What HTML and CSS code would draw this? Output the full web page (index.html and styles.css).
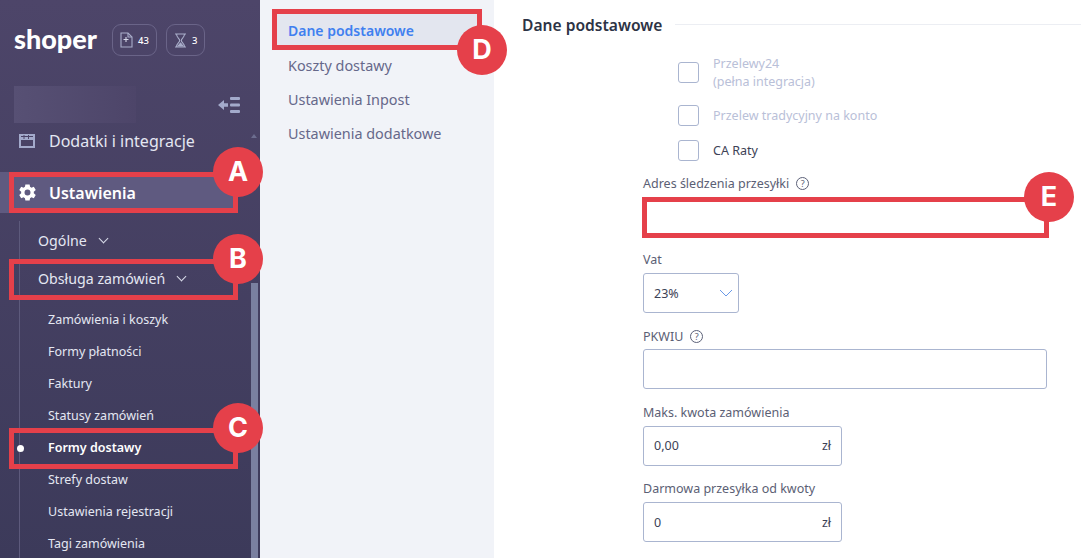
FILE: index.html
```html
<!DOCTYPE html>
<html lang="pl">
<head>
    <meta charset="UTF-8">
    <title>Formy dostawy</title>
    <link rel="stylesheet" href="styles.css">
</head>
<body>
    <div class="page">
        <aside class="sidebar">
            <div class="head">
                <span class="logo">shoper</span>
                <span class="pill">
                    <svg width="13" height="16" viewBox="0 0 13 16" fill="none" stroke="#a9aeca" stroke-width="1.1"><path d="M1 1h7l4 4v10H1z"/><path d="M8 1v4h4"/><path d="M6 5v5M3.500 7.500h5" stroke="#d5d8e8"/></svg>
                    43
                </span>
                <span class="pill">
                    <svg width="13" height="15" viewBox="0 0 13 15" fill="none" stroke="#a9aeca" stroke-width="1.1"><path d="M1 1h11M1 14h11M2.500 1c0 4 3.200 4.500 3.200 6.500S2.500 10 2.500 14M10.500 1c0 4-3.200 4.500-3.200 6.500s3.200 2.500 3.200 6.500"/><path d="M4 13l2.500-3L9 13z" fill="#a9aeca"/></svg>
                    3
                </span>
            </div>
            <div class="shopbar">
                <div class="blur"></div>
                <svg width="22" height="16" viewBox="0 0 22 16" fill="#a3aacb"><path d="M0 8l6-5v3.300h4v3.400H6V13z"/><rect x="12" y="0" width="10" height="3" rx="1"/><rect x="12" y="6.500" width="10" height="3" rx="1"/><rect x="12" y="13" width="10" height="3" rx="1"/></svg>
            </div>
            <div class="menu-item">
                <svg width="16" height="14" viewBox="0 0 16 14" fill="none" stroke="#a3aacb" stroke-width="2"><rect x="1" y="1" width="14" height="12"/><path d="M1 4.500h14" stroke-width="3"/><path d="M5 1v4M9.500 1v4" stroke="#4c4568" stroke-width="1"/></svg>
                <span>Dodatki i integracje</span>
                <span class="scroll-up"></span>
            </div>
            <div class="menu-item active">
                <svg width="17" height="17" viewBox="2 2 20 20" fill="#fff"><path d="M19.400 13a7.500 7.500 0 0 0 0-2l2.300-1.800-2.300-4-2.700 1.100a7.500 7.500 0 0 0-1.700-1L14.500 2.500h-5L9 5.300a7.500 7.500 0 0 0-1.700 1L4.600 5.200l-2.300 4L4.600 11a7.500 7.500 0 0 0 0 2l-2.300 1.800 2.300 4 2.700-1.100a7.500 7.500 0 0 0 1.700 1l.5 2.800h5l.5-2.800a7.500 7.500 0 0 0 1.700-1l2.700 1.100 2.300-4zM12 15.500a3.500 3.500 0 1 1 0-7 3.500 3.500 0 0 1 0 7z"/></svg>
                <span>Ustawienia</span>
            </div>
            <div class="submenu">
                <div class="sub-head first">Ogólne <span class="chev"></span></div>
                <div class="sub-head">Obsługa zamówień <span class="chev"></span></div>
                <ul class="links">
                    <li>Zamówienia i koszyk</li>
                    <li>Formy płatności</li>
                    <li>Faktury</li>
                    <li>Statusy zamówień</li>
                    <li class="current">Formy dostawy</li>
                    <li>Strefy dostaw</li>
                    <li>Ustawienia rejestracji</li>
                    <li>Tagi zamówienia</li>
                </ul>
            </div>
            <div class="scrollbar"></div>
        </aside>

        <nav class="tabs">
            <a class="tab selected">Dane podstawowe</a>
            <a class="tab">Koszty dostawy</a>
            <a class="tab">Ustawienia Inpost</a>
            <a class="tab">Ustawienia dodatkowe</a>
        </nav>

        <main class="content">
            <div class="title-row">
                <h2>Dane podstawowe</h2>
                <div class="rule"></div>
            </div>
            <div class="form">
                <div class="checks">
                    <div class="check two muted"><span class="box"></span><span>Przelewy24<br>(pełna integracja)</span></div>
                    <div class="check muted"><span class="box"></span><span>Przelew tradycyjny na konto</span></div>
                    <div class="check"><span class="box"></span><span>CA Raty</span></div>
                </div>
                <label class="label">Adres śledzenia przesyłki <span class="help">?</span></label>
                <div class="field"></div>
                <label class="label">Vat</label>
                <div class="field select">23%
                    <svg width="14" height="8" viewBox="0 0 14 8" fill="none" stroke="#6a9ae8" stroke-width="1"><path d="M1 1l6 6 6-6"/></svg>
                </div>
                <label class="label">PKWIU <span class="help">?</span></label>
                <div class="field"></div>
                <label class="label">Maks. kwota zamówienia</label>
                <div class="field money">0,00<span>zł</span></div>
                <label class="label">Darmowa przesyłka od kwoty</label>
                <div class="field money">0<span>zł</span></div>
            </div>
        </main>
    </div>

    <!-- Oznaczenia na zrzucie -->
    <div class="mark mark-a"><b>A</b></div>
    <div class="mark mark-b"><b>B</b></div>
    <div class="mark mark-c"><b>C</b></div>
    <div class="mark mark-d"><b>D</b></div>
    <div class="mark mark-e"><b>E</b></div>
</body>
</html>
```

FILE: styles.css
```css
* {
    box-sizing: border-box;
}
html, body {
    margin: 0;
    height: 558px;
    overflow: hidden;
}
body {
    font-family: 'Noto Sans', 'Open Sans', sans-serif;
    background: #fff;
    position: relative;
}
.page {
    display: flex;
    height: 558px;
}

/* Sidebar */
.sidebar {
    width: 260px;
    flex: none;
    position: relative;
    overflow: hidden;
    background: linear-gradient(to bottom, #4d4569, #3c3a5a);
    color: #e4e7f2;
}
.head {
    display: flex;
    align-items: center;
    padding: 24px 0 0 14px;
    box-sizing: content-box;
    height: 32px;
}
.logo {
    font-family: 'Lato', sans-serif;
    font-weight: 900;
    font-size: 27px;
    line-height: 30px;
    margin-top: -2px;
    color: #fff;
    width: 98px;
}
.pill {
    display: flex;
    align-items: center;
    gap: 5px;
    height: 32px;
    padding: 0 7px 0 7px;
    margin-right: 9px;
    border: 1px solid #6a6488;
    border-radius: 9px;
    font-size: 9.500px;
    font-weight: 500;
    color: #fff;
}
.shopbar {
    display: flex;
    align-items: center;
    justify-content: space-between;
    height: 37px;
    margin-top: 30px;
    padding: 0 20px 0 14px;
}
.blur {
    width: 122px;
    height: 37px;
    background: linear-gradient(to right, #575074, #4d4569);
}
.menu-item {
    display: flex;
    align-items: center;
    gap: 14px;
    height: 41px;
    padding-left: 19px;
    font-size: 16px;
    position: relative;
    margin-top: -3px;
}
.menu-item svg {
    flex: none;
}
.menu-item.active {
    width: 233px;
    gap: 13px;
    margin-top: 11px;
    background: #5f5a80;
    color: #fff;
    font-weight: 600;
}
.scroll-up {
    position: absolute;
    left: 251px;
    top: 11px;
    border: 3px solid transparent;
    border-bottom: 4px solid #6c6d8f;
}
.submenu {
    margin: 8px 0 0 19px;
    border-left: 1px solid #5d5a7c;
    height: 400px;
}
.sub-head {
    display: flex;
    align-items: center;
    gap: 11px;
    height: 38px;
    padding-left: 18px;
    font-size: 14.200px;
}
.chev {
    width: 7px;
    height: 7px;
    margin: -3px 0 0 2px;
    border-right: 1.500px solid #d8dbea;
    border-bottom: 1.500px solid #d8dbea;
    transform: rotate(45deg);
}
.links {
    list-style: none;
    margin: 7px 0 0;
    padding: 0;
}
.links li {
    position: relative;
    height: 32px;
    line-height: 32px;
    padding-left: 28px;
    font-size: 12.500px;
}
.links li.current {
    font-weight: 600;
    color: #fff;
}
.links li.current::before {
    content: "";
    position: absolute;
    left: -3px;
    top: 13px;
    width: 7px;
    height: 7px;
    border-radius: 50%;
    background: #fff;
}
.scrollbar {
    position: absolute;
    left: 251px;
    top: 283px;
    bottom: 0;
    width: 7px;
    background: #7a80a0;
}

/* Zakladki */
.tabs {
    width: 234px;
    flex: none;
    background: #f1f3f8;
    padding: 14px 17px 0;
}
.tab {
    display: block;
    height: 34px;
    line-height: 34px;
    padding-left: 11px;
    font-size: 14.400px;
    color: #66688a;
}
.tab.selected {
    height: 31px;
    line-height: 34px;
    margin-bottom: 4px;
    font-weight: 600;
    font-size: 14px;
    color: #4080f0;
    background: #e3e6ef;
}

/* Formularz */
.content {
    flex: 1;
    padding: 0 0 0 28px;
}
.title-row {
    display: flex;
    align-items: center;
    gap: 13px;
    height: 50px;
}
.title-row h2 {
    margin: 0;
    font-size: 15.600px;
    font-weight: 600;
    color: #2d3345;
}
.rule {
    flex: 1;
    height: 1px;
    margin-top: -2px;
    background: #eceef3;
}
.form {
    width: 404px;
    margin-left: 121px;
}
.checks {
    padding: 3px 0 0 35px;
    margin-bottom: -0.630px;
}
.check {
    display: flex;
    align-items: center;
    gap: 14px;
    height: 21px;
    margin-bottom: 14px;
    font-size: 12.500px;
    line-height: 18px;
    color: #3d4256;
}
.check.two {
    align-items: flex-start;
    height: 36px;
    margin-bottom: 16px;
}
.check.two .box {
    margin-top: 9px;
}
.check.two span + span {
    margin-top: 2px;
}
.check.muted {
    color: #b9c0d8;
}
.box {
    flex: none;
    width: 21px;
    height: 21px;
    border: 1px solid #aab5d0;
    border-radius: 3px;
}
.label {
    display: flex;
    align-items: center;
    gap: 7px;
    height: 18px;
    margin-bottom: 4.330px;
    font-size: 12.500px;
    color: #5b6074;
}
.help {
    display: inline-block;
    width: 13px;
    height: 13px;
    line-height: 11px;
    border: 1px solid #5c6178;
    border-radius: 50%;
    text-align: center;
    font-size: 9px;
}
.field {
    display: flex;
    align-items: center;
    justify-content: space-between;
    height: 40px;
    margin-bottom: 14px;
    padding: 0 10px;
    border: 1px solid #aab5d0;
    border-radius: 3px;
    font-size: 12.500px;
    color: #3d4256;
}
.select {
    width: 96px;
    padding-right: 5px;
}
.money {
    width: 199px;
}

/* Oznaczenia */
.mark {
    position: absolute;
    border: 5px solid #e5404a;
}
.mark b {
    position: absolute;
    width: 50px;
    height: 50px;
    border-radius: 50%;
    background: #e5404a;
    color: #fff;
    font-family: 'Inter', sans-serif;
    font-size: 27px;
    font-weight: 700;
    line-height: 50px;
    text-align: center;
}
.mark-a, .mark-b, .mark-c {
    left: 9px;
    width: 229px;
}
.mark-a b, .mark-b b, .mark-c b {
    right: -30px;
    top: -30px;
}
.mark-a {
    top: 172px;
    height: 41px;
}
.mark-b {
    top: 259px;
    height: 41px;
}
.mark-c {
    top: 428px;
    height: 41px;
}
.mark-d {
    left: 272px;
    top: 9px;
    width: 210px;
    height: 41px;
}
.mark-d b {
    right: -30px;
    bottom: -30px;
}
.mark-e {
    left: 642px;
    top: 197px;
    width: 407px;
    height: 41px;
    background: #fff;
}
.mark-e b {
    right: -30px;
    top: -30px;
}
```
